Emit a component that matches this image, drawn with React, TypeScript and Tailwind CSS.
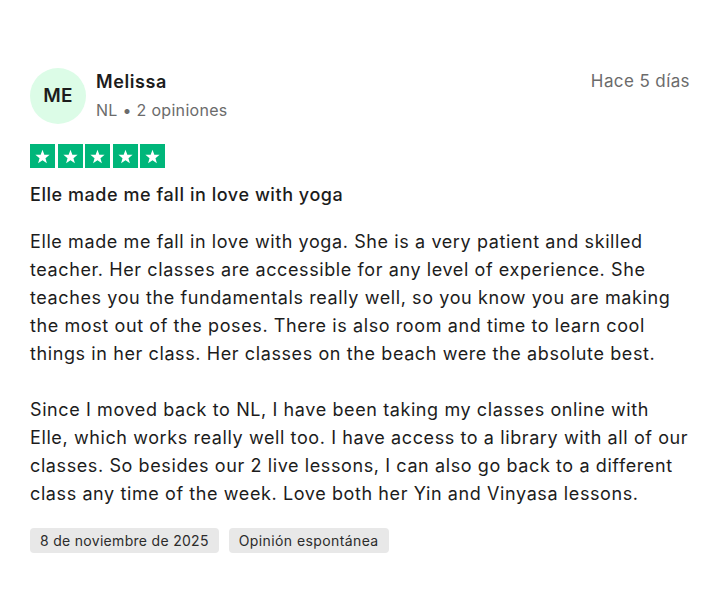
import React from 'react';

const Star = () => (
  <div className="flex h-[24px] w-[25px] items-center justify-center bg-[#00b67a]">
    <svg viewBox="0 0 24 24" className="h-[17px] w-[17px]" fill="#ffffff">
      <path d="M12 2.5l2.6 6.9 7.4.3-5.8 4.6 2 7.1L12 17.3l-6.2 4.1 2-7.1L2 9.7l7.4-.3z" />
    </svg>
  </div>
);

export default function App() {
  return (
    <div className="min-h-[591px] w-full bg-white px-[30px] pt-[68px] text-[#1c1c1c]" style={{ fontFamily: 'Inter, "Noto Sans", sans-serif' }}>
      {/* header */}
      <div className="flex items-start">
        <div className="flex h-[56px] w-[56px] shrink-0 items-center justify-center rounded-full bg-[#dcfce7] text-[19px] font-semibold tracking-[0.3px] text-[#1c1c1c]">
          ME
        </div>
        <div className="ml-[10px] flex-1 pt-[1px]">
          <div className="text-[18px] font-semibold leading-[26px] tracking-[0.6px]">Melissa</div>
          <div className="mt-[3px] text-[16px] leading-[24px] tracking-[0.3px] text-[#6b6b6b]">NL • 2 opiniones</div>
        </div>
        <div className="pt-[1px] text-[17px] leading-[24px] tracking-[0.4px] text-[#6b6b6b]">Hace 5 días</div>
      </div>

      <div className="mt-[20px] flex gap-[2.5px]">
        <Star />
        <Star />
        <Star />
        <Star />
        <Star />
      </div>

      <h2 className="mt-[14px] text-[18px] font-medium leading-[26px] tracking-[0.55px]">Elle made me fall in love with yoga</h2>

      <p className="mt-[20px] text-[18px] leading-[28px] tracking-[0.6px]">
        Elle made me fall in love with yoga. She is a very patient and skilled teacher. Her classes are accessible for any level of experience. She teaches you the fundamentals really well, so you know you are making the most out of the poses. There is also room and time to learn cool things in her class. Her classes on the beach were the absolute best.
        <br />
        <br />
        Since I moved back to NL, I have been taking my classes online with Elle, which works really well too. I have access to a library with all of our classes. So besides our 2 live lessons, I can also go back to a different class any time of the week. Love both her Yin and Vinyasa lessons.
      </p>

      {/* tags */}
      <div className="mt-[20px] flex gap-[10px]">
        <span className="rounded-[4px] bg-[#e8e8e8] px-[10px] py-[2px] text-[14px] leading-[21px] tracking-[0.3px] text-[#2c2c2c]">8 de noviembre de 2025</span>
        <span className="rounded-[4px] bg-[#e8e8e8] px-[10px] py-[2px] text-[14px] leading-[21px] tracking-[0.4px] text-[#2c2c2c]">Opinión espontánea</span>
      </div>
    </div>
  );
}
